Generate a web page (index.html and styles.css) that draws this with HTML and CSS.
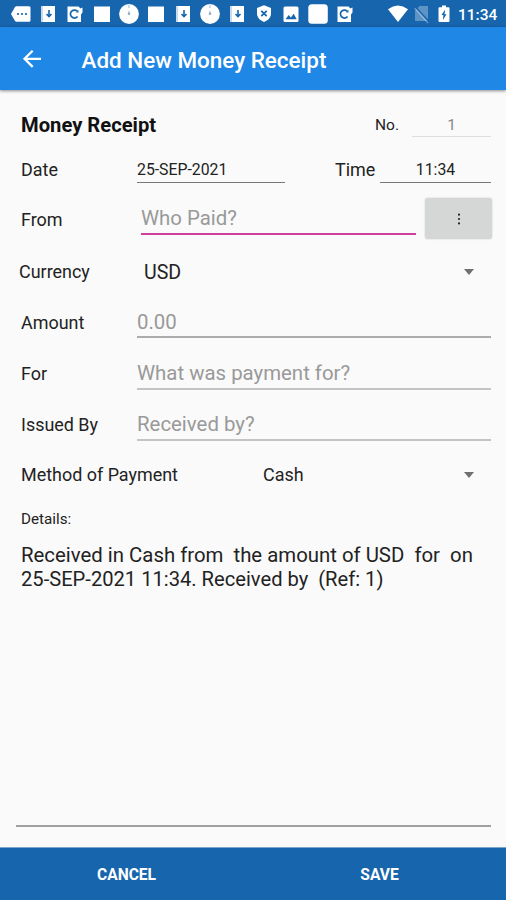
FILE: index.html
```html
<!DOCTYPE html>
<html lang="en">
<head>
<meta charset="utf-8">
<title>Add New Money Receipt</title>
<link rel="stylesheet" href="styles.css">
</head>
<body>
<svg class="defs" width="0" height="0">
  <symbol id="download" viewBox="0 0 20 20"><path fill="#fff" d="M5 2h12v16H5z"/><path fill="#c6dbee" d="M3 2h2v16H3z"/><path d="M11 6v6M8.500 10L11 12.500l2.500-2.500" fill="none" stroke="#1765ad" stroke-width="1.600"/></symbol>
  <symbol id="sync" viewBox="0 0 20 20"><path fill="#fff" d="M2.500 2.500h11l2 2 2-1v5l-1.500 2v7.500H2.500z"/><path d="M12.600 7.600A4 4 0 1 0 12.600 12.500" fill="none" stroke="#1765ad" stroke-width="1.700"/><path fill="#1765ad" d="M11 8.600h2.500V6z"/></symbol>
  <symbol id="square" viewBox="0 0 20 20"><path fill="#fff" d="M2 2.500h16V18H2z"/></symbol>
  <symbol id="clock" viewBox="0 0 20 20"><circle cx="10" cy="10" r="9.900" fill="#fff"/><path d="M10 1v3M10 7v3" stroke="#a9c4df" stroke-width="1.200"/><circle cx="10" cy="9.700" r="1.300" fill="#8eabc9"/></symbol>
</svg>
<div class="screen">
  <header class="status">
    <div class="notifications">
      <svg viewBox="0 0 20 20"><path fill="#fff" d="M0 10l4-7c.4-.6.8-.8 1.500-.8H18q1.500 0 1.500 1.500v12.600q0 1.500-1.500 1.500H5.500c-.7 0-1.100-.2-1.500-.8z"/><g fill="#1765ad"><circle cx="7" cy="10" r="1.100"/><circle cx="11" cy="10" r="1.100"/><circle cx="15" cy="10" r="1.100"/></g></svg>
      <svg><use href="#download"/></svg>
      <svg><use href="#sync"/></svg>
      <svg><use href="#square"/></svg>
      <svg><use href="#clock"/></svg>
      <svg><use href="#square"/></svg>
      <svg><use href="#download"/></svg>
      <svg><use href="#clock"/></svg>
      <svg><use href="#download"/></svg>
      <svg viewBox="0 0 20 20"><path fill="#fff" d="M10 1.300l7 2.700v5.500c0 4-3 7-7 8.500-4-1.500-7-4.500-7-8.500V4z"/><path d="M7.300 6.800l5.400 5.400M12.700 6.800l-5.400 5.400" stroke="#1765ad" stroke-width="1.700"/></svg>
      <svg viewBox="0 0 20 20"><rect x="2.500" y="2.500" width="15" height="15.500" rx="1.500" fill="#fff"/><path fill="#1765ad" d="M4.500 15.300l3.200-4.300 2.200 2.500 2.800-3.700 3 5.500z"/></svg>
      <svg viewBox="0 0 20 20"><rect x=".3" y=".2" width="19.500" height="19.500" rx="3.500" fill="#fff"/></svg>
      <svg><use href="#sync"/></svg>
    </div>
    <div class="system">
      <svg viewBox="0 0 20 20"><path fill="#fff" d="M0 5.200Q10-2 20 5.200L10 18z"/></svg>
      <svg class="sim" viewBox="0 0 16 20"><path fill="#fff" opacity=".3" d="M5.500 2H14v15H1V6.500z"/><path d="M1 2.500l14 15" stroke="#1765ad" stroke-width="1.500"/><path d="M.5 4l13.500 15" stroke="#fff" opacity=".35" stroke-width="1.200"/></svg>
      <svg class="battery" viewBox="0 0 12 20"><path fill="#fff" d="M4 1.500h4v1.800h2.500q1 0 1 1V17q0 1-1 1h-9q-1 0-1-1V4.300q0-1 1-1H4z"/><path fill="#1765ad" d="M7.200 5.500L3.500 11h1.900l-.5 5L8.500 10.200H6.500z"/></svg>
      <span>11:34</span>
    </div>
  </header>
  <div class="appbar">
    <svg viewBox="0 0 20 20"><path d="M19 9.800H3M10.700 1.700L2.500 9.800l8.200 8.100" fill="none" stroke="#fff" stroke-width="2.300"/></svg>
    <h1>Add New Money Receipt</h1>
  </div>
  <main>
    <div class="row heading"><h2>Money Receipt</h2><span class="no">No.</span><div class="field number">1</div></div>
    <div class="row date"><label>Date</label><div class="field small">25-SEP-2021</div><label class="time">Time</label><div class="field small hour">11:34</div></div>
    <div class="row from"><label>From</label><div class="field hint focus">Who Paid?</div><button class="more"><svg viewBox="0 0 4 16"><circle cx="2" cy="3" r="1.200"/><circle cx="2" cy="8" r="1.200"/><circle cx="2" cy="13" r="1.200"/></svg></button></div>
    <div class="row currency"><label>Currency</label><span class="value">USD</span><i class="arrow"></i></div>
    <div class="row"><label>Amount</label><div class="field hint dark">0.00</div></div>
    <div class="row"><label>For</label><div class="field hint">What was payment for?</div></div>
    <div class="row"><label>Issued By</label><div class="field hint">Received by?</div></div>
    <div class="row method"><label>Method of Payment</label><span class="value">Cash</span><i class="arrow"></i></div>
    <div class="details">Details:</div>
    <div class="summary"><p>Received in Cash from  the amount of USD  for  on</p><p class="second">25-SEP-2021 11:34. Received by  (Ref: 1)</p></div>
  </main>
  <footer><button>CANCEL</button><button>SAVE</button></footer>
</div>
</body>
</html>
```
FILE: styles.css
```css
* { box-sizing: border-box; }
body { margin: 0; font-family: Roboto, "Liberation Sans", sans-serif; color: #222; background: #fafafa; }
h1, h2, p { margin: 0; }
svg { display: block; flex: none; }
button { border: 0; padding: 0; font: inherit; color: inherit; }
.defs { position: absolute; }
.screen { width: 506px; height: 900px; display: flex; flex-direction: column; overflow: hidden; }

.status { height: 27px; flex: none; background: #1765ad; display: flex; align-items: center; padding: 1px 0 0 11px; color: #fff; }
.notifications { display: flex; gap: 7px; }
.notifications svg { width: 20px; height: 20px; }
.system { display: flex; align-items: center; margin-left: 33px; }
.system svg { width: 20px; height: 20px; }
.system .sim { width: 16px; margin-left: 6px; }
.system .battery { width: 12px; margin-left: 8px; }
.system span { margin-left: 8px; font-size: 15.500px; font-weight: 500; line-height: 20px; padding-top: 2px; }

.appbar { height: 63px; flex: none; background: #1f87e5; display: flex; align-items: center; padding-left: 22px; color: #fff; box-shadow: 0 1px 3px rgba(0, 0, 0, .45); z-index: 1; }
.appbar svg { width: 20px; height: 20px; }
.appbar h1 { margin-left: 39.500px; font-size: 22.450px; font-weight: 500; line-height: 30px; padding-top: 2px; }

main { flex: 1; min-height: 0; display: flex; flex-direction: column; padding: 13px 15px 0 21px; }
.row { height: 51px; flex: none; display: flex; align-items: center; font-size: 17.950px; }
.row label { width: 116px; flex: none; line-height: 24px; }
.field { flex: 1; align-self: flex-end; line-height: 26px; padding-bottom: 2px; margin-bottom: 9px; border-bottom: 2px solid #c4c4c4; white-space: nowrap; }
.hint { font-size: 20.400px; color: #999; }
.field.dark { border-color: #acacac; margin-bottom: 10px; padding-bottom: 1px; }

.heading { height: 44px; }
.heading h2 { font-size: 20.200px; font-weight: 700; line-height: 26px; flex: 1; color: #111; }
.no { font-size: 15.500px; margin-right: 13px; }
.field.number { flex: none; width: 79px; font-size: 15.500px; line-height: 22px; text-align: center; color: #888; border-bottom: 1px solid #ddd; margin-bottom: 10px; padding-bottom: 0; }
.date { height: 46px; }
.field.small { flex: none; width: 148px; font-size: 15.800px; line-height: 22px; border-bottom: 1px solid #777; margin-bottom: 10px; padding-bottom: 1px; }
.row .time { width: 45px; margin-left: 50px; }
.field.small.hour { width: 111px; text-align: center; }
.from { height: 53px; }
.from .focus { margin: 0 9px 11px 4px; border-color: #cf3f9d; }
.more { width: 67px; height: 41px; background: #d5d7d6; border-radius: 3px; margin: 0 -1px 2px 0; box-shadow: 0 0 2px rgba(0, 0, 0, .2); display: flex; align-items: center; justify-content: center; }
.more svg { width: 4px; height: 14px; fill: #222; }
.value { flex: 1; }
.arrow { border: 5.500px solid transparent; border-top: 6px solid #707070; border-bottom: 0; margin-right: 17px; }
.currency { margin-left: -2px; }
.currency label { width: 125px; }
.currency .value { font-size: 19.600px; padding-top: 2px; }
.method { height: 50px; }
.row.method label { width: 242px; }
.method .value { padding-bottom: 2px; }
.details { height: 39px; line-height: 39px; font-size: 15.200px; flex: none; }
.summary { flex: 1; margin-left: -5px; padding: 4px 0 0 5px; margin-bottom: 20px; border-bottom: 2px solid #a0a0a0; font-size: 20.360px; line-height: 24px; white-space: pre; }
.second { font-size: 20.150px; }

footer { height: 53px; flex: none; background: #1765ad; border-top: 1px solid #7ba4ca; display: flex; color: #fff; font-size: 15.600px; font-weight: 700; }
footer button { flex: 1; background: none; padding-top: 1px; }
```
